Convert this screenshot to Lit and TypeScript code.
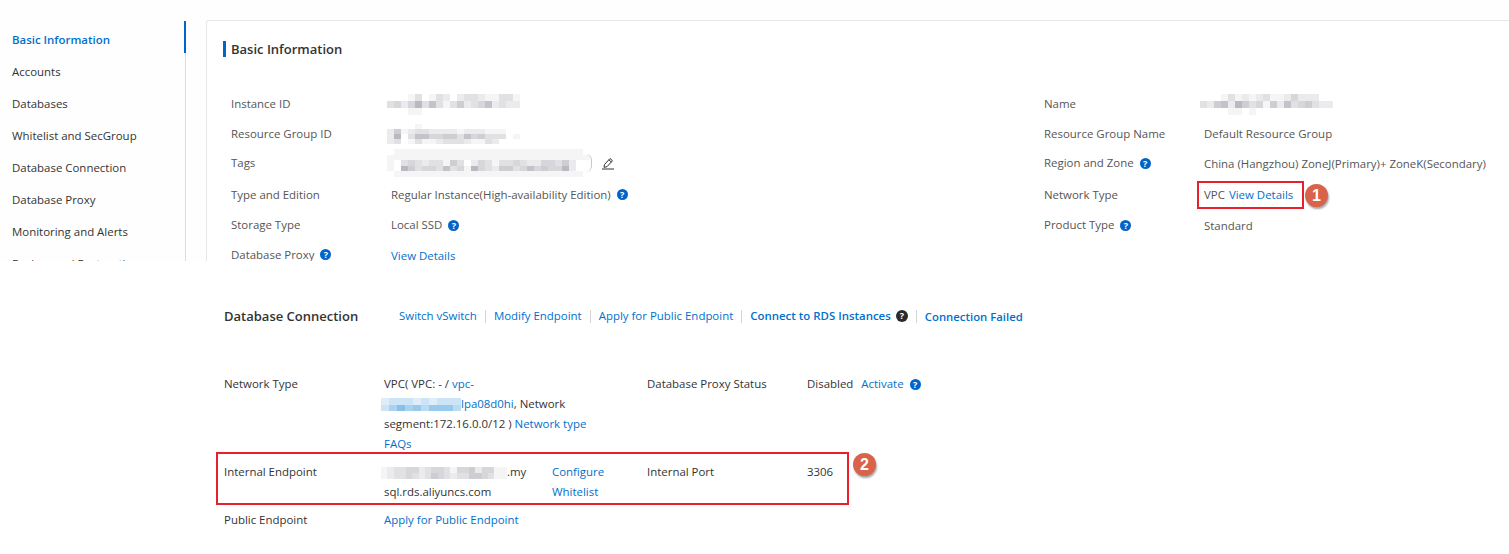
import { LitElement, html, css } from "lit";
import { customElement } from "lit/decorators.js";

const cellColor = (d: string, tint: string) => {
  const n = parseInt(d, 10);
  if (tint === "blue") return `rgb(${255 - n * 17},${255 - n * 9},${255 - n * 3})`;
  return `rgb(${255 - n * 10},${255 - n * 10},${255 - n * 9})`;
};

const mosaic = (rows: string[], tint = "gray", size = 7, h = 7) => html`<span class="mosaic">
  ${rows.map(
    (r) => html`<span class="mrow">${[...r].map(
      (c) => html`<i style="width:${size}px;height:${h}px;background:${cellColor(c, tint)}"></i>`
    )}</span>`
  )}
</span>`;

const help = (dark = false) => html`<span class="help ${dark ? "dark" : ""}">?</span>`;

const M_ID = ["0001301320233211331", "3424736313523462322", "0001100000000000000"];
const M_RG = ["0000100000000000000", "2512332222122211100", "2703664455364533301", "2301311233321132000"];
const M_TAG = [
  "01111111111111111111111111110",
  "11111111111111111111111111111",
  "10343233153024313343224435200",
  "10753443634174325534645447200",
  "01111111111111111111111111110",
];
const M_NAME = ["0001312123112422200", "3256275341526345322", "0000110100000000000"];
const M_EP = ["12334423443144524411", "12334323543233554311"];
const M_VPC = ["2333232333", "3575646664"];

@customElement("app-root")
export class AppRoot extends LitElement {
  static styles = css`
    :host {
      display: block;
      width: 1509px;
      height: 554px;
      overflow: hidden;
      background: #fff;
      font: 11.45px/20px "Open Sans", "Noto Sans", sans-serif;
      color: #333;
    }
    * { box-sizing: border-box; }
    a { color: #0070cc; text-decoration: none; }
    .top { display: flex; height: 261px; overflow: hidden; background: #fefefe; }
    nav {
      width: 186px;
      flex: none;
      margin-top: 21px;
      border-right: 1px solid #d9dde3;
      margin-right: 20px;
    }
    .item {
      display: flex;
      align-items: center;
      height: 32px;
      padding: 6px 0 0 12px;
      margin-right: -1px;
      border-right: 2px solid transparent;
      color: #333;
      white-space: nowrap;
    }
    .item.on { color: #0070cc; font-weight: 600; border-right-color: #0064c8; }
    .card {
      flex: 1;
      margin-top: 20px;
      border: 1px solid #e7e7e7;
      border-right: 0;
      border-bottom: 0;
      border-radius: 3px 0 0 0;
      background: #fff;
      padding: 20px 0 0 16px;
    }
    .title {
      height: 16px;
      border-left: 3px solid #0064c8;
      padding-left: 5px;
      font-size: 13px;
      line-height: 16px;
      font-weight: 600;
      color: #333;
    }
    .info {
      display: grid;
      grid-template-columns: 160px 653px 160px auto;
      grid-template-rows: 30px 30px 28px 35px 26px 33px;
      margin: 32px 0 0 8px;
    }
    .info > div { display: flex; align-items: center; white-space: nowrap; }
    .lb { color: #555; }
    .val { color: #555; }
    .info > .nudge { padding-top: 2px; }
    .mosaic { display: inline-flex; flex-direction: column; vertical-align: middle; }
    .mrow { display: flex; }
    .mrow i { display: block; }
    .shift { margin-left: -4px; }
    .help {
      display: inline-block;
      flex: none;
      width: 11px;
      height: 11px;
      margin-left: 6px;
      border-radius: 50%;
      background: #0064c8;
      color: #fff;
      font: 700 9px/11px "Open Sans", sans-serif;
      text-align: center;
    }
    .help.dark { background: #2b2b2b; width: 12px; height: 12px; line-height: 12px; }
    .tagend {
      width: 6px;
      height: 18px;
      margin-left: -4px;
      border-right: 1px solid #c8c8c8;
      border-radius: 0 9px 9px 0;
    }
    .pencil { margin-left: 9px; display: block; }
    .redbox {
      position: relative;
      display: flex;
      align-items: center;
      height: 28px;
      margin-left: -7px;
      padding: 0 8px 0 5px;
      border: 2px solid #e8202e;
      gap: 4px;
      width: 107px;
    }
    .badge {
      position: absolute;
      width: 23px;
      height: 23px;
      border-radius: 50%;
      background: #d9634a;
      color: #fff;
      font: 700 16px/23px "Liberation Sans", sans-serif;
      text-align: center;
      box-shadow: 1px 2px 2px rgba(0, 0, 0, 0.35);
    }
    .b1 { left: 106px; top: 1px; }
    .b2 { left: 635px; top: -1px; }
    .bottom { padding: 45px 0 0 224px; }
    .head { display: flex; align-items: center; height: 20px; white-space: nowrap; }
    .head h2 {
      margin: 0 22px 0 0;
      font-size: 13px;
      font-weight: 600;
      line-height: 20px;
      color: #333;
      width: 153px;
    }
    .head .sep { width: 1px; height: 13px; background: #d5d5d5; margin: 0 8px; }
    .head .strong { font-weight: 600; }
    .head .low { margin-top: 2px; font-size: 11.35px; }
    .head .help { margin-left: 5px; }
    .r1 {
      display: grid;
      grid-template-columns: 160px 263px 160px auto;
      margin-top: 48px;
    }
    .flexv { display: flex; align-items: flex-start; }
    .flexv .help { margin-top: 5px; }
    .flexv a { margin-left: 8px; }
    .r2 {
      position: relative;
      display: grid;
      grid-template-columns: 160px 168px 95px 160px auto;
      width: 633px;
      height: 53px;
      margin: -2px 0 0 -8px;
      padding: 8px 0 0 6px;
      border: 2px solid #e8202e;
    }
    .r3 { display: grid; grid-template-columns: 160px auto; margin-top: 5px; }
    .line { display: block; height: 20px; white-space: nowrap; }
    .line .mosaic { margin-left: -3px; }
  `;

  render() {
    const nav = [
      "Basic Information",
      "Accounts",
      "Databases",
      "Whitelist and SecGroup",
      "Database Connection",
      "Database Proxy",
      "Monitoring and Alerts",
      "Backup and Restoration",
    ];
    return html`
      <section class="top">
        <nav>${nav.map((n, i) => html`<div class="item ${i === 0 ? "on" : ""}">${n}</div>`)}</nav>
        <div class="card">
          <div class="title">Basic Information</div>
          <div class="info">
            <div class="lb">Instance ID</div>
            <div><span class="shift">${mosaic(M_ID)}</span></div>
            <div class="lb">Name</div>
            <div><span class="shift">${mosaic(M_NAME)}</span></div>

            <div class="lb">Resource Group ID</div>
            <div><span class="shift">${mosaic(M_RG, "gray", 7, 5)}</span></div>
            <div class="lb">Resource Group Name</div>
            <div class="val">Default Resource Group</div>

            <div class="lb">Tags</div>
            <div>
              <span class="shift">${mosaic(M_TAG, "gray", 7, 5.5)}</span><span class="tagend"></span>
              <svg class="pencil" width="14" height="14" viewBox="0 0 14 14" fill="none" stroke="#333" stroke-width="1">
                <path d="M3.5 8.5 9 2.5l2.5 2.2L6 10.7l-3 .6z" />
                <path d="M7.8 3.8l2.5 2.2" />
                <path d="M1 13h12" />
              </svg>
            </div>
            <div class="lb">Region and Zone ${help()}</div>
            <div class="val nudge">China (Hangzhou) ZoneJ(Primary)+ ZoneK(Secondary)</div>

            <div class="lb">Type and Edition</div>
            <div class="val">Regular Instance(High-availability Edition) ${help()}</div>
            <div class="lb">Network Type</div>
            <div>
              <div class="redbox">
                <span class="val">VPC</span><a>View Details</a>
                <span class="badge b1">1</span>
              </div>
            </div>

            <div class="lb">Storage Type</div>
            <div class="val">Local SSD ${help()}</div>
            <div class="lb">Product Type ${help()}</div>
            <div class="val nudge">Standard</div>

            <div class="lb">Database Proxy ${help()}</div>
            <div class="nudge"><a>View Details</a></div>
          </div>
        </div>
      </section>

      <section class="bottom">
        <div class="head">
          <h2>Database Connection</h2>
          <a>Switch vSwitch</a><span class="sep"></span>
          <a>Modify Endpoint</a><span class="sep"></span>
          <a>Apply for Public Endpoint</a><span class="sep"></span>
          <a class="strong">Connect to RDS Instances</a>${help(true)}<span class="sep"></span>
          <a class="strong low">Connection Failed</a>
        </div>

        <div class="r1">
          <div>Network Type</div>
          <div>
            <span class="line">VPC( VPC: - / <a>vpc-</a></span>
            <span class="line">${mosaic(M_VPC, "blue", 8, 6.5)}<a>lpa08d0hi</a>, Network</span>
            <span class="line">segment:172.16.0.0/12 ) <a>Network type</a></span>
            <span class="line"><a>FAQs</a></span>
          </div>
          <div>Database Proxy Status</div>
          <div class="flexv">Disabled <a>Activate</a>${help()}</div>
        </div>

        <div class="r2">
          <div>Internal Endpoint</div>
          <div>
            <span class="line">${mosaic(M_EP, "gray", 6.3, 6)}.my</span>
            <span class="line">sql.rds.aliyuncs.com</span>
          </div>
          <div>
            <span class="line"><a>Configure</a></span>
            <span class="line"><a>Whitelist</a></span>
          </div>
          <div>Internal Port</div>
          <div>3306</div>
          <span class="badge b2">2</span>
        </div>

        <div class="r3">
          <div>Public Endpoint</div>
          <div><a>Apply for Public Endpoint</a></div>
        </div>
      </section>
    `;
  }
}
